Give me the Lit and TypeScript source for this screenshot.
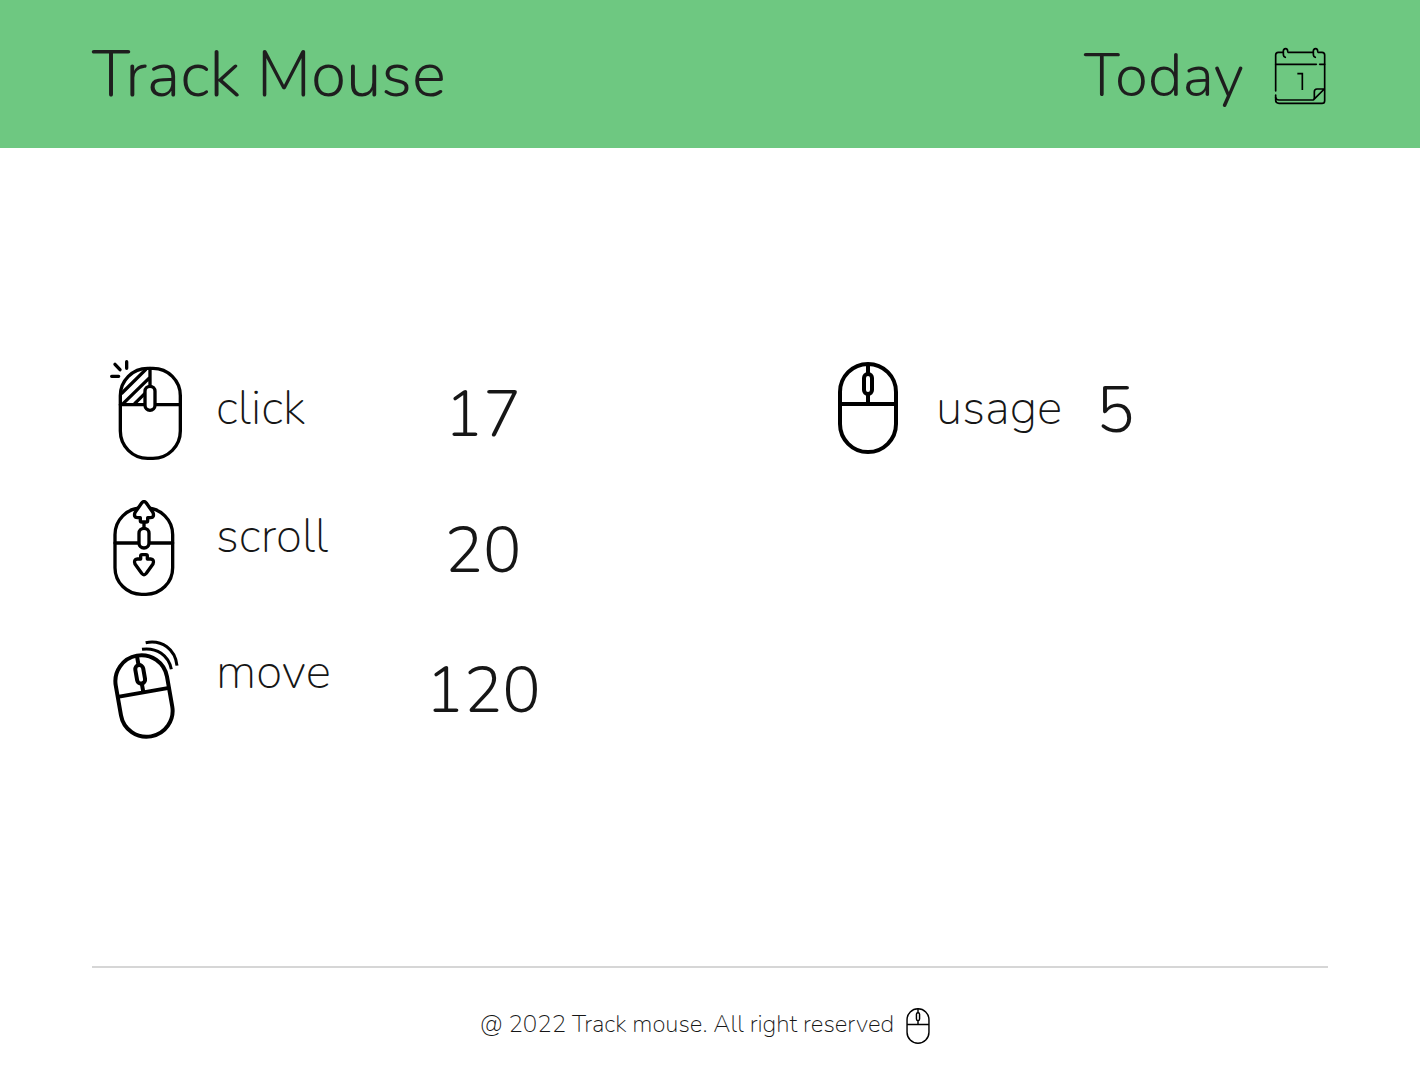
import { LitElement, html, css, svg } from "lit";
import { customElement, property } from "lit/decorators.js";

const clickArt = svg`
  <g fill="none" stroke="#000" stroke-width="10" stroke-linecap="round">
    <rect x="61" y="55" width="180" height="270" rx="82"></rect>
    <path d="M66 129 L137 59 M70 160 L149 83 M104 161 L135 130 M150 55 V109 M61 164 H241"></path>
    <path d="M80 35 V55 M45 43 L60 59 M35 79 H56"></path>
    <rect x="135" y="109" width="30" height="72" rx="15" fill="#fff"></rect>
  </g>`;

const scrollArt = svg`
  <g fill="none" stroke="#000" stroke-width="10" stroke-linecap="round" stroke-linejoin="round">
    <rect x="45" y="54" width="173" height="259" rx="80"></rect>
    <path d="M45 159 H218 M132 96 V115"></path>
    <rect x="117" y="115" width="30" height="59" rx="15" fill="#fff"></rect>
    <path fill="#fff" d="M125 39 Q132 30 139 39 L159 68 Q164 82 152 83 H143 V92 Q143 96 139 96 H125 Q121 96 121 92 V83 H112 Q100 82 105 68 Z"></path>
    <path fill="#fff" d="M125 250 Q132 259 139 250 L159 222 Q164 208 152 207 H142 V198 Q142 194 138 194 H126 Q122 194 122 198 V207 H112 Q100 208 105 222 Z"></path>
  </g>`;

const moveArt = svg`
  <g fill="none" stroke="#000" stroke-width="12">
    <g transform="rotate(-10 132 198)">
      <rect x="54" y="75" width="156" height="246" rx="78"></rect>
      <path d="M54 187 H210 M132 75 V187"></path>
      <rect x="120" y="104" width="24" height="56" rx="12" fill="#fff"></rect>
    </g>
    <path stroke-width="9" d="M126 58 C170 52 206 76 214 118 M137 38 C186 28 226 58 231 107"></path>
  </g>`;

const mouseArt = (stroke: number, wheel: string) => svg`
  <g fill="none" stroke="#000" stroke-width=${stroke}>
    <rect x="60" y="42" width="168" height="264" rx="84"></rect>
    <path d="M60 162 H228 M144 42 V162"></path>
    <rect x="132" y="72" width="24" height="60" rx="12" fill=${wheel}></rect>
  </g>`;

const calendarArt = svg`
  <g fill="none" stroke="#000" stroke-width="5" stroke-linecap="round" stroke-linejoin="round">
    <path d="M46 168 V60 Q46 52 54 52 H69 M83 52 H159 M173 52 H185 Q193 52 193 60 V197 Q193 205 185 205 H56 Q46 205 46 196 V180"></path>
    <path d="M46 88 H168 M178 88 H193"></path>
    <path d="M75 67 Q69 65 69 57 V49 Q69 41 76 41 Q82 41 82 49 M165 67 Q159 65 159 57 V49 Q159 41 166 41 Q172 41 172 49"></path>
    <path d="M46 188 Q47 195 56 195 H155 Q162 195 162 188 V170 Q162 162 170 162 H192 L160 194"></path>
    <path stroke-linecap="butt" stroke-linejoin="miter" d="M111 116 H126 V165"></path>
  </g>`;

@customElement("site-header")
class SiteHeader extends LitElement {
  static styles = css`
    :host { display: block; }
    .bar {
      display: flex;
      align-items: flex-end;
      justify-content: space-between;
      padding: 36px 92px 34px;
      background: #6ec881;
      color: #1e1e1e;
    }
    .title { margin: 0; font-size: 64px; line-height: 78px; font-weight: 300; }
    .period {
      display: flex;
      align-items: center;
      gap: 27px;
      padding: 0;
      border: 0;
      background: none;
      color: inherit;
      font: inherit;
      font-size: 60px;
      line-height: 76px;
      font-weight: 300;
      cursor: pointer;
    }
    .calendar { width: 57px; height: 60px; }
  `;

  render() {
    return html`
      <header class="bar">
        <h1 class="title">Track Mouse</h1>
        <button class="period" type="button">
          <span>Today</span>
          <svg class="calendar" viewBox="32 33 171 180" aria-hidden="true">${calendarArt}</svg>
        </button>
      </header>
    `;
  }
}

@customElement("mouse-stats")
class MouseStats extends LitElement {
  @property({ attribute: false }) counts = { click: 17, scroll: 20, move: 120, usage: 5 };

  static styles = css`
    :host { display: block; }
    .stats {
      display: grid;
      grid-template-columns: 728px auto;
      padding: 212px 92px 226px 110px;
      color: #161616;
    }
    .group { display: grid; justify-content: start; align-items: start; }
    .events { grid-template-columns: 72px 158px 150px; column-gap: 34px; }
    .session { grid-template-columns: 60px 122px auto; column-gap: 38px; }
    .icons { display: grid; grid-auto-rows: 100px; row-gap: 40px; }
    .icon { display: block; width: 72px; height: 100px; }
    .mouse { display: block; width: 60px; height: 92px; padding-top: 2px; }
    .labels, .values { display: grid; }
    .labels { grid-template-rows: 128px 136px; padding-top: 20px; }
    .values { grid-template-rows: 136px 140px; padding-top: 17px; justify-items: center; }
    .session .values { padding-top: 13px; justify-items: start; }
    .label { font-size: 48px; line-height: 56px; font-weight: 200; }
    .value { font-size: 64px; line-height: 76px; font-weight: 300; }
  `;

  render() {
    const c = this.counts;
    return html`
      <main class="stats">
        <section class="group events">
          <div class="icons">
            ${[clickArt, scrollArt, moveArt].map(
              (art) => html`<svg class="icon" viewBox="30 30 216 300" aria-hidden="true">${art}</svg>`
            )}
          </div>
          <div class="labels">
            <label class="label" for="click">click</label>
            <label class="label" for="scroll">scroll</label>
            <label class="label" for="move">move</label>
          </div>
          <div class="values">
            <output class="value" id="click">${c.click}</output>
            <output class="value" id="scroll">${c.scroll}</output>
            <output class="value" id="move">${c.move}</output>
          </div>
        </section>
        <section class="group session">
          <svg class="mouse" viewBox="54 36 180 276" aria-hidden="true">${mouseArt(12, "#fff")}</svg>
          <div class="labels"><label class="label" for="usage">usage</label></div>
          <div class="values"><output class="value" id="usage">${c.usage}</output></div>
        </section>
      </main>
    `;
  }
}

@customElement("site-footer")
class SiteFooter extends LitElement {
  static styles = css`
    :host { display: block; padding: 0 92px; }
    .foot {
      display: flex;
      align-items: flex-start;
      justify-content: center;
      gap: 12px;
      padding: 40px 10px 44px 0;
      border-top: 2px solid #d6d6d6;
      color: #161616;
    }
    .note { margin: 0; font-size: 24px; line-height: 32px; font-weight: 200; }
    .mark { width: 24px; height: 36px; }
  `;

  render() {
    return html`
      <footer class="foot">
        <p class="note">@ 2022 Track mouse. All right reserved</p>
        <svg class="mark" viewBox="54 36 180 276" aria-hidden="true">${mouseArt(11, "#fff")}</svg>
      </footer>
    `;
  }
}

@customElement("app-root")
class AppRoot extends LitElement {
  static styles = css`
    :host {
      display: block;
      min-height: 100vh;
      background: #fff;
      font-family: Nunito, Lato, "Open Sans", sans-serif;
    }
  `;

  render() {
    return html`
      <site-header></site-header>
      <mouse-stats></mouse-stats>
      <site-footer></site-footer>
    `;
  }
}
